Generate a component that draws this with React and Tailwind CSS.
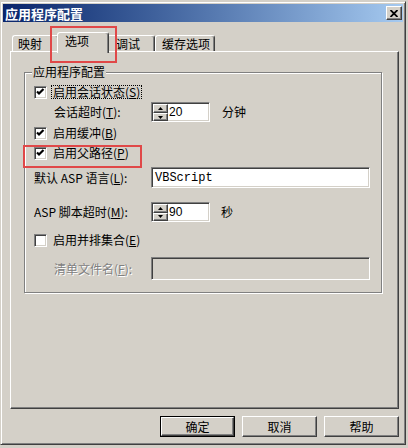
const raised =
  "border border-t-white border-l-white border-r-[#404040] border-b-[#404040] shadow-[inset_-1px_-1px_0_#808080]";
const sunken =
  "border border-t-[#808080] border-l-[#808080] border-r-white border-b-white shadow-[inset_1px_1px_0_#404040,inset_-1px_-1px_0_#d4d0c8]";

function Check({ checked }) {
  return (
    <div className={`flex h-[13px] w-[13px] shrink-0 items-center justify-center bg-white ${sunken}`}>
      {checked && (
        <svg width="9" height="9" viewBox="0 0 9 9">
          <path d="M1 3.5 L3 5.5 L7.5 1" fill="none" stroke="#000" strokeWidth="2.2" />
        </svg>
      )}
    </div>
  );
}

function Key({ k }) {
  return (
    <span>
      (<span className="underline">{k}</span>)
    </span>
  );
}

function Spinner({ value }) {
  return (
    <div className={`flex h-[20px] w-[59px] bg-white ${sunken}`}>
      <div className="ml-[1px] mt-[1px] flex w-[15px] flex-col">
        <div className={`flex h-[9px] items-center justify-center bg-[#d4d0c8] ${raised}`}>
          <svg width="5" height="3" viewBox="0 0 5 3">
            <path d="M2.5 0 L5 3 L0 3 Z" fill="#000" />
          </svg>
        </div>
        <div className={`flex h-[8px] items-center justify-center bg-[#d4d0c8] ${raised}`}>
          <svg width="5" height="3" viewBox="0 0 5 3">
            <path d="M0 0 L5 0 L2.5 3 Z" fill="#000" />
          </svg>
        </div>
      </div>
      <span className="self-center pl-[1px] font-['Liberation_Sans',sans-serif] text-[12px] leading-none">{value}</span>
    </div>
  );
}

function Tab({ label, w, pl, selected, className = "" }) {
  return (
    <div
      className={`flex items-center rounded-t-[3px] border border-b-0 border-t-white border-l-white border-r-[#404040] bg-[#d4d0c8] shadow-[inset_-1px_0_0_#808080] ${
        selected ? "relative z-10 mb-[-2px] h-[21px] pb-[4px]" : "h-[16px]"
      } ${className}`}
      style={{ width: w, paddingLeft: pl }}
    >
      <span className="text-[12px] leading-none">{label}</span>
    </div>
  );
}

function Button({ label, def }) {
  return (
    <div className={`h-[21px] w-[75px] ${def ? "border border-black" : ""}`}>
      <div className={`flex h-full w-full items-center justify-center bg-[#d4d0c8] ${raised}`}>
        <span className="text-[12px] leading-none">{label}</span>
      </div>
    </div>
  );
}

export default function App() {
  return (
    <div className="relative h-[448px] w-[408px] overflow-hidden bg-[#d4d0c8] font-['Noto_Sans_CJK_SC',sans-serif] text-black">
      <div className="mt-[1px] h-[444px] w-[406px] border border-t-[#d4d0c8] border-l-[#d4d0c8] border-r-[#404040] border-b-[#404040] px-[2px] pt-[2px] shadow-[inset_1px_1px_0_#fff,inset_-1px_-1px_0_#808080]">
        {/* title bar */}
        <div className="flex h-[18px] items-center justify-between bg-linear-to-r from-[#0a246a] to-[#a6caf0] pl-[2px]">
          <span className="text-[13px] font-bold leading-none text-white">应用程序配置</span>
          <div className={`mr-[1px] flex h-[14px] w-[16px] items-center justify-center bg-[#d4d0c8] ${raised}`}>
            <svg width="8" height="7" viewBox="0 0 8 7">
              <path d="M0.5 0 L7.5 7 M7.5 0 L0.5 7" stroke="#000" strokeWidth="1.8" />
            </svg>
          </div>
        </div>

        {/* tabs */}
        <div className="mt-[10px] flex h-[19px] items-end pl-[9px]">
          <Tab label="映射" w={47} pl={5} />
          <Tab label="选项" w={52} pl={7} selected className="ml-[-2px]" />
          <Tab label="调试" w={48} pl={8} className="ml-[-2px]" />
          <Tab label="缓存选项" w={60} pl={6} />
        </div>

        {/* panel */}
        <div className="ml-[7px] h-[358px] w-[389px] border border-t-white border-l-white border-r-[#404040] border-b-[#404040] shadow-[inset_-1px_-1px_0_#808080]">
          <div className="relative ml-[13px] mt-[20px] h-[221px] w-[358px] border border-[#808080] pl-[9px] shadow-[inset_1px_1px_0_#fff,1px_1px_0_#fff]">
            <span className="absolute left-[7px] top-[-9px] bg-[#d4d0c8] px-[1px] text-[12px] leading-[16px]">
              应用程序配置
            </span>

            <div className="flex h-[14px] items-center mt-[12px]">
              <Check checked />
              <span className="ml-[4px] border border-dotted border-black px-[1px] text-[12px] leading-[12px]">
                启用会话状态<Key k="S" />
              </span>
            </div>

            <div className="mt-[3px] flex h-[20px] items-center">
              <span className="w-[117px] pl-[20px] text-[12px] leading-none">
                会话超时<Key k="T" />:
              </span>
              <Spinner value="20" />
              <span className="ml-[12px] text-[12px] leading-none">分钟</span>
            </div>

            <div className="mt-[4px] flex h-[14px] items-center">
              <Check checked />
              <span className="ml-[6px] text-[12px] leading-none">
                启用缓冲<Key k="B" />
              </span>
            </div>

            <div className="mt-[6px] flex h-[14px] items-center">
              <Check checked />
              <span className="ml-[6px] text-[12px] leading-none">
                启用父路径<Key k="P" />
              </span>
            </div>

            <div className="mt-[7px] flex h-[21px] items-center">
              <span className="w-[117px] text-[12px] leading-none">
                默认 ASP 语言<Key k="L" />:
              </span>
              <div className={`flex h-[21px] w-[219px] items-center bg-white pl-[3px] ${sunken}`}>
                <span className="font-['Liberation_Mono',monospace] text-[12px] leading-none">VBScript</span>
              </div>
            </div>

            <div className="mt-[13px] flex h-[21px] items-center">
              <span className="w-[117px] text-[12px] leading-none">
                ASP 脚本超时<Key k="M" />:
              </span>
              <Spinner value="90" />
              <span className="ml-[11px] text-[12px] leading-none">秒</span>
            </div>

            <div className="mt-[11px] flex h-[14px] items-center">
              <Check />
              <span className="ml-[6px] text-[12px] leading-none">
                启用并排集合<Key k="E" />
              </span>
            </div>

            <div className="mt-[10px] flex h-[23px] items-center">
              <span className="w-[117px] pl-[20px] text-[12px] leading-none text-[#808080] [text-shadow:1px_1px_0_#fff]">
                清单文件名<Key k="F" />:
              </span>
              <div className={`h-[23px] w-[219px] bg-[#d4d0c8] ${sunken}`} />
            </div>
          </div>
        </div>

        {/* buttons */}
        <div className="mt-[7px] flex justify-end gap-[7px] pr-[4px]">
          <Button label="确定" def />
          <Button label="取消" />
          <Button label="帮助" />
        </div>
      </div>

      {/* red annotation boxes */}
      <div className="absolute left-[50px] top-[26px] h-[37px] w-[67px] border-2 border-[#e04848]" />
      <div className="absolute left-[23px] top-[145px] h-[23px] w-[119px] border-2 border-[#e04848]" />
    </div>
  );
}
